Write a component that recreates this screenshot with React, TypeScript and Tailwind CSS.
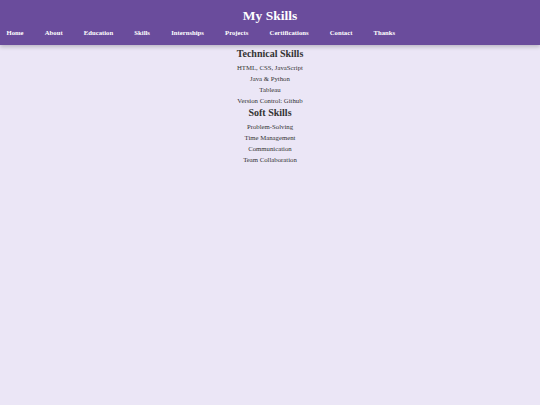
const navLinks = [
  "Home",
  "About",
  "Education",
  "Skills",
  "Internships",
  "Projects",
  "Certifications",
  "Contact",
  "Thanks",
];

const technical = [
  "HTML, CSS, JavaScript",
  "Java & Python",
  "Tableau",
  "Version Control: Github",
];

const soft = [
  "Problem-Solving",
  "Time Management",
  "Communication",
  "Team Collaboration",
];

const SkillGroup = ({ title, items }: { title: string; items: string[] }) => (
  <section className="flex flex-col items-center">
    <h2 className="text-[10px] leading-[12px] font-bold text-[#333333] mb-[1.5px]">
      {title}
    </h2>
    <ul className="flex flex-col items-center">
      {items.map((item) => (
        <li key={item} className="text-[6.75px] leading-[11px] text-[#333333]">
          {item}
        </li>
      ))}
    </ul>
  </section>
);

export default function App() {
  return (
    <div className="min-h-[405px] w-full bg-[#ebe6f6] font-['Liberation_Serif','Times_New_Roman',serif]">
      <header className="h-[45px] bg-[#6a4c9c] pt-[8px] shadow-[0_2px_4px_rgba(0,0,0,0.2)]">
        <h1 className="text-center text-[13.5px] leading-[16px] font-bold text-white">
          My Skills
        </h1>
        <nav className="mt-[4px] flex gap-[21.2px] pl-[6.5px]">
          {navLinks.map((link) => (
            <a
              key={link}
              href="#"
              className="text-[6.7px] leading-[10px] font-bold text-white"
            >
              {link}
            </a>
          ))}
        </nav>
      </header>
      <main className="flex flex-col items-center pt-[3px] gap-[1.5px]">
        <SkillGroup title="Technical Skills" items={technical} />
        <SkillGroup title="Soft Skills" items={soft} />
      </main>
    </div>
  );
}
